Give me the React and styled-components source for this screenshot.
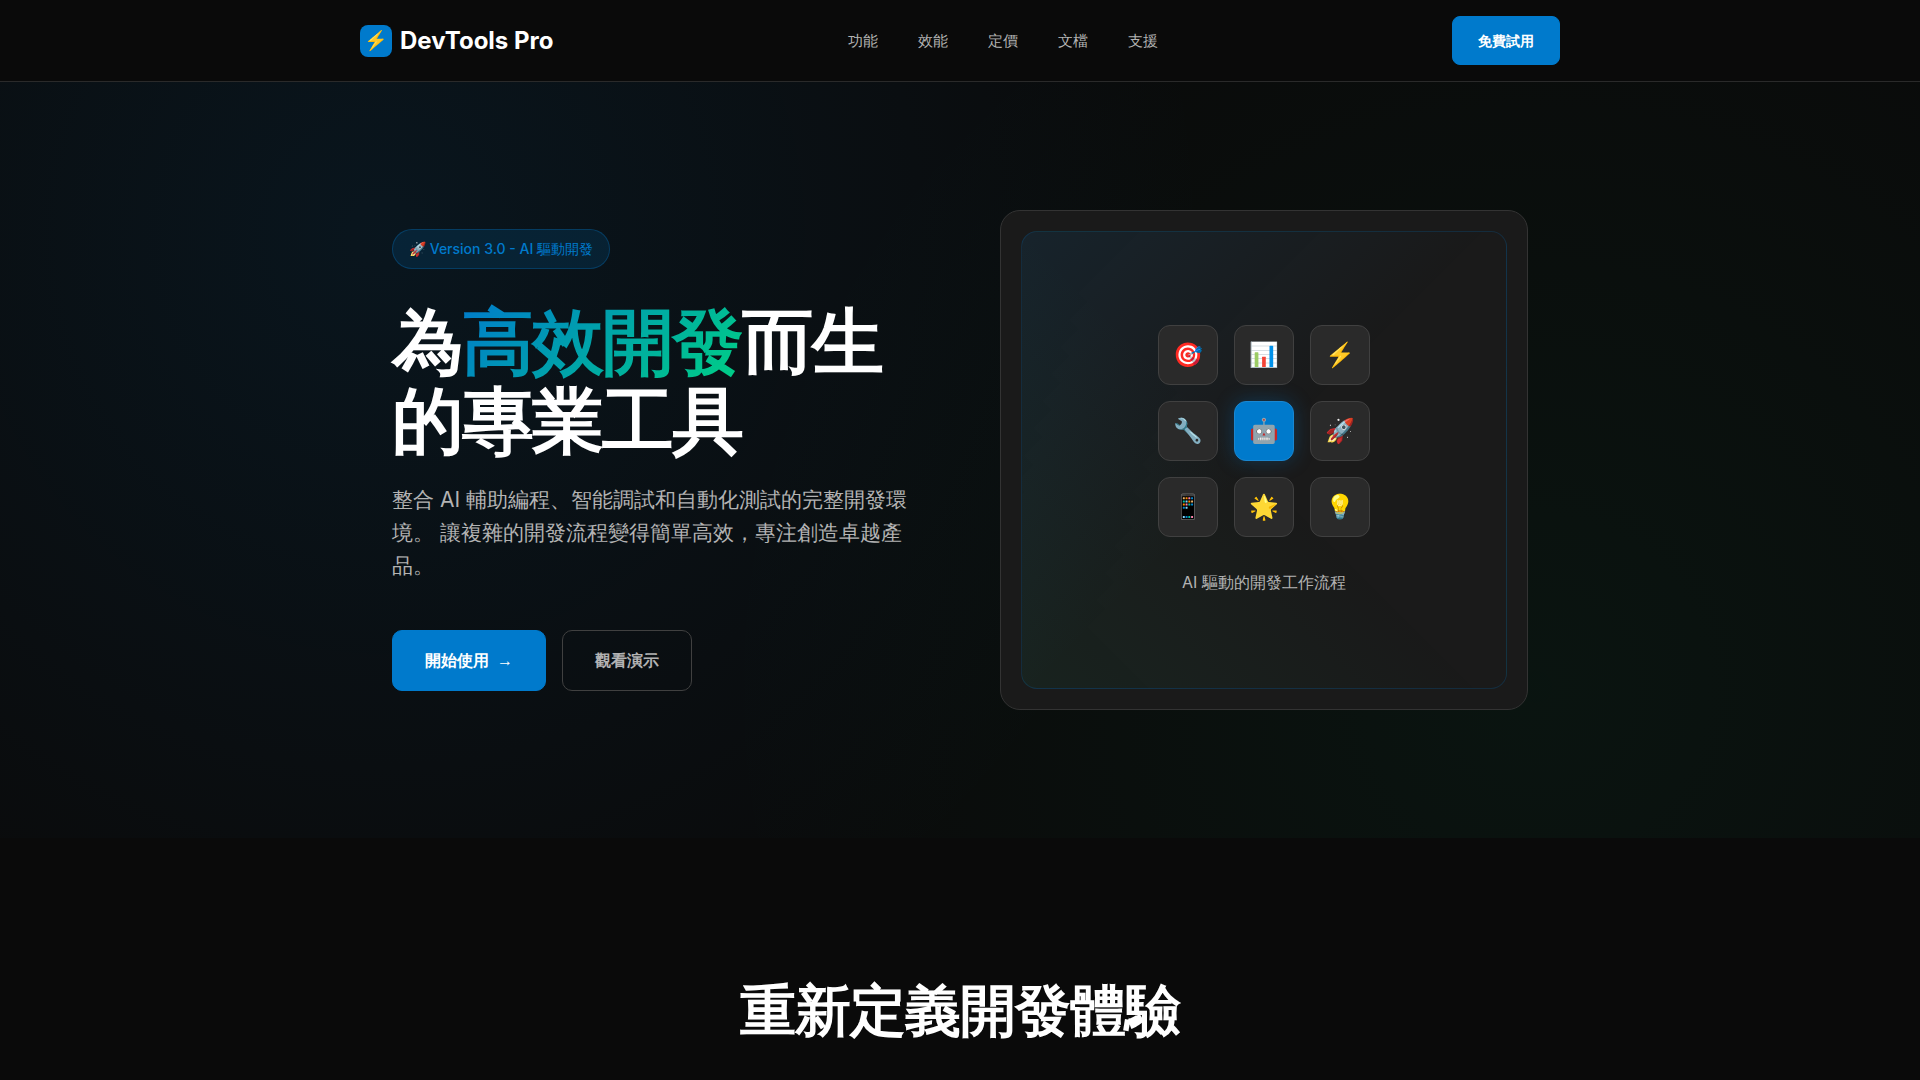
import React from "react";
import styled, { createGlobalStyle } from "styled-components";

const GlobalStyle = createGlobalStyle`
  *, *::before, *::after { box-sizing: border-box; margin: 0; padding: 0; }
  body {
    margin: 0;
    background: #0a0a0a;
    color: #ffffff;
    font-family: Inter, sans-serif;
    font-size: 16px;
    line-height: 26px;
    overflow-x: hidden;
  }
`;

const Header = styled.header`
  background: #0a0a0a;
  border-bottom: 1px solid #2a2a2a;
`;

const HeaderInner = styled.div`
  max-width: 1200px;
  margin: 0 auto;
  padding: 16px 0;
  display: flex;
  align-items: center;
  justify-content: space-between;
`;

const Logo = styled.a`
  display: flex;
  align-items: center;
  gap: 8px;
  color: #ffffff;
  font-size: 24px;
  line-height: 36px;
  font-weight: 700;
  text-decoration: none;
`;

const LogoMark = styled.span`
  display: flex;
  align-items: center;
  justify-content: center;
  width: 32px;
  height: 32px;
  border-radius: 8px;
  background: #007acc;
  font-size: 19px;
  line-height: 32px;
`;

const Nav = styled.nav`
  display: flex;
  gap: 40px;
`;

const NavLink = styled.a`
  color: #b3b3b3;
  font-size: 15px;
  line-height: 24px;
  font-weight: 500;
  text-decoration: none;
`;

const Button = styled.button`
  display: inline-flex;
  align-items: center;
  justify-content: center;
  gap: 8px;
  padding: ${(p) => (p.$large ? "16px 32px" : "12px 25px")};
  border: 1px solid ${(p) => (p.$primary ? "#007acc" : "#404040")};
  border-radius: ${(p) => (p.$large ? "10px" : "8px")};
  background: ${(p) => (p.$primary ? "#007acc" : "transparent")};
  color: ${(p) => (p.$primary ? "#ffffff" : "#b3b3b3")};
  font-family: inherit;
  font-size: ${(p) => (p.$large ? "16px" : "14px")};
  line-height: ${(p) => (p.$large ? "27px" : "23px")};
  font-weight: 600;
  cursor: pointer;
`;

const Arrow = styled.span`
  font-family: "Liberation Sans", sans-serif;
`;

const Hero = styled.section`
  padding: 128px 0;
  background:
    radial-gradient(circle at 20% 20%, rgba(0, 122, 204, 0.1) 0%, transparent 50%),
    radial-gradient(circle at 80% 80%, rgba(0, 208, 132, 0.05) 0%, transparent 50%),
    #0a0a0a;
`;

const HeroInner = styled.div`
  max-width: 1200px;
  margin: 0 auto;
  padding: 0 32px;
  display: grid;
  grid-template-columns: 1fr 1fr;
  gap: 80px;
  align-items: center;
`;

const Badge = styled.p`
  width: fit-content;
  margin-bottom: 32px;
  padding: 8px 16px;
  border: 1px solid rgba(0, 122, 204, 0.3);
  border-radius: 20px;
  background: rgba(0, 122, 204, 0.15);
  color: #007acc;
  font-size: 14px;
  line-height: 22px;
  font-weight: 500;
`;

const Title = styled.h1`
  margin-bottom: 24px;
  font-size: 72px;
  line-height: 79px;
  font-weight: 700;
  letter-spacing: -2px;
`;

const Highlight = styled.span`
  background: linear-gradient(135deg, #007acc, #00d084);
  -webkit-background-clip: text;
  background-clip: text;
  color: transparent;
`;

const Lead = styled.p`
  margin-bottom: 48px;
  color: #b3b3b3;
  font-size: 21px;
  line-height: 33px;
`;

const Actions = styled.div`
  display: flex;
  gap: 16px;
`;

const Showcase = styled.div`
  display: flex;
  min-height: 500px;
  padding: 20px;
  border: 1px solid #333333;
  border-radius: 20px;
  background: #1a1a1a;
`;

const Screen = styled.div`
  flex: 1;
  display: flex;
  flex-direction: column;
  align-items: center;
  justify-content: center;
  gap: 32px;
  border: 1px solid rgba(0, 122, 204, 0.2);
  border-radius: 16px;
  background:
    linear-gradient(135deg, rgba(0, 122, 204, 0.1) 0%, transparent 50%),
    linear-gradient(45deg, rgba(0, 208, 132, 0.05) 0%, transparent 50%);
`;

const Tiles = styled.ul`
  display: grid;
  grid-template-columns: repeat(3, 60px);
  gap: 16px;
  list-style: none;
`;

const Tile = styled.li`
  display: flex;
  align-items: center;
  justify-content: center;
  height: 60px;
  border: 1px solid ${(p) => (p.$active ? "#1a87d1" : "#404040")};
  border-radius: 12px;
  background: ${(p) => (p.$active ? "#007acc" : "#2a2a2a")};
  box-shadow: ${(p) => (p.$active ? "0 0 20px rgba(0, 122, 204, 0.3)" : "none")};
  font-size: 24px;
  line-height: 38px;
`;

const Caption = styled.p`
  color: #b3b3b3;
`;

const Features = styled.section`
  padding: 128px 32px;
  text-align: center;
`;

const SectionTitle = styled.h2`
  font-size: 56px;
  line-height: 88px;
  font-weight: 700;
  letter-spacing: -1px;
`;

const links = ["功能", "效能", "定價", "文檔", "支援"];
const tiles = ["🎯", "📊", "⚡", "🔧", "🤖", "🚀", "📱", "🌟", "💡"];
const lead =
  "整合 AI 輔助編程、智能調試和自動化測試的完整開發環境。 讓複雜的開發流程變得簡單高效，專注創造卓越產品。";

export default function App() {
  return (
    <>
      <GlobalStyle />
      <Header>
        <HeaderInner>
          <Logo href="#top">
            <LogoMark>⚡</LogoMark>
            DevTools Pro
          </Logo>
          <Nav>
            {links.map((label) => (
              <NavLink key={label} href={`#${label}`}>{label}</NavLink>
            ))}
          </Nav>
          <Button type="button" $primary>免費試用</Button>
        </HeaderInner>
      </Header>
      <main>
        <Hero>
          <HeroInner>
            <div>
              <Badge>🚀 Version 3.0 - AI 驅動開發</Badge>
              <Title>
                為<Highlight>高效開發</Highlight>而生的專業工具
              </Title>
              <Lead>{lead}</Lead>
              <Actions>
                <Button type="button" $primary $large>
                  開始使用 <Arrow>→</Arrow>
                </Button>
                <Button type="button" $large>觀看演示</Button>
              </Actions>
            </div>
            <Showcase>
              <Screen>
                <Tiles>
                  {tiles.map((icon, i) => (
                    <Tile key={icon} $active={i === 4}>{icon}</Tile>
                  ))}
                </Tiles>
                <Caption>AI 驅動的開發工作流程</Caption>
              </Screen>
            </Showcase>
          </HeroInner>
        </Hero>
        <Features>
          <SectionTitle>重新定義開發體驗</SectionTitle>
        </Features>
      </main>
    </>
  );
}
